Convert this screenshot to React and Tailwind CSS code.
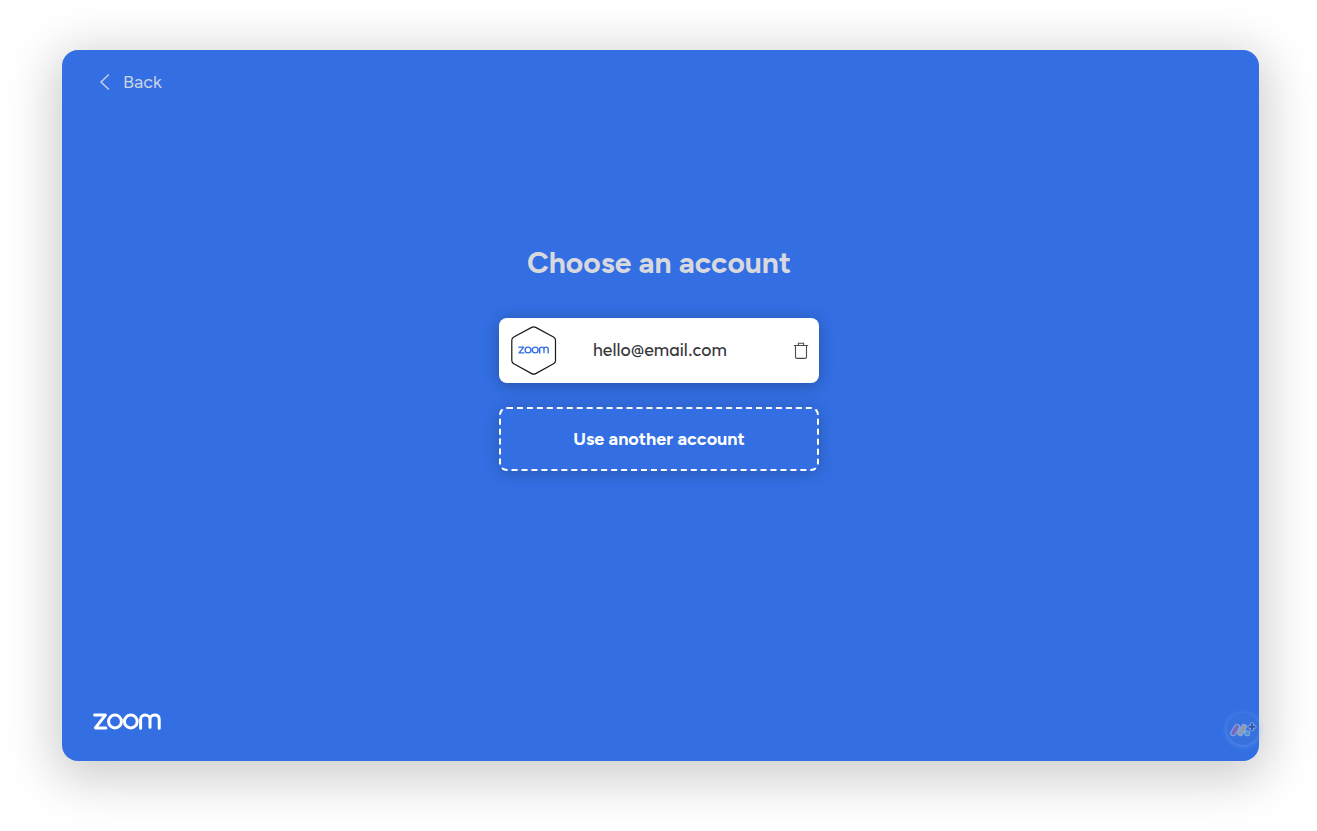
function ZoomLogo({ className }) {
  return (
    <svg viewBox="0 0 68 17" className={className} fill="none" stroke="currentColor" strokeWidth="3" role="img" aria-label="zoom">
      <path d="M1.6 2.1H12.4L2.4 14.9H12.9" strokeLinecap="round" strokeLinejoin="round" />
      <circle cx="22" cy="8.5" r="6.4" />
      <circle cx="37.8" cy="8.5" r="6.4" />
      <path d="M47.6 15.2V6.4C47.6 3.8 49.4 2.1 52.1 2.1S57 3.8 57 6.4V14.2M57 6.4C57 3.8 58.8 2.1 61.6 2.1S66.2 3.8 66.2 6.4V15.2" strokeLinecap="round" />
    </svg>
  );
}

function AccountAvatar() {
  return (
    <span className="relative flex h-[50px] w-[46px] items-center justify-center text-[#316de2]">
      <svg viewBox="0 0 46 50" className="absolute inset-0 h-full w-full" fill="white" stroke="#17191d" strokeWidth="1.2" aria-hidden="true">
        <path d="M20.7 1.4Q22.7 0.3 24.7 1.4L42.5 11Q44.5 12.1 44.5 14.3V34.5Q44.5 36.7 42.5 37.8L24.7 47.6Q22.7 48.7 20.7 47.6L2.8 37.8Q0.8 36.7 0.8 34.5V14.3Q0.8 12.1 2.8 11Z" />
      </svg>
      <ZoomLogo className="relative mr-0.5 mb-0.5 h-2 w-[31px]" />
    </span>
  );
}

function TrashIcon() {
  return (
    <svg viewBox="0 0 16 18" className="h-[18px] w-4" fill="none" stroke="#4b4b4e" strokeWidth="1.1" aria-hidden="true">
      <path d="M0.8 3.5H15.2M5.4 3.2V1.2H10.6V3.2M2.5 3.7V14.9Q2.5 16.4 4 16.4H12Q13.5 16.4 13.5 14.9V3.7" />
    </svg>
  );
}

function AssistantBadge() {
  return (
    <button
      type="button"
      aria-label="Assistant"
      className="absolute right-0 bottom-4 flex h-8 w-8 items-center justify-center rounded-full bg-[#3771dd] shadow-[0_1px_5px_1px_rgba(130,170,240,0.4)]"
    >
      <svg viewBox="0 0 28 18" className="h-[18px] w-7 shrink-0" fill="none" strokeLinecap="round" aria-hidden="true">
        <g stroke="#86a8e8" strokeWidth="6">
          <path d="M4.2 13.2L8 6.8M11.3 13.2L15 6.8M18.2 13.2H18.3" />
          <path d="M20.5 6.8H25.5M23 4.3V9.3" strokeWidth="4" />
        </g>
        <path d="M4.2 13.2L8 6.8" stroke="#7568bd" strokeWidth="4" />
        <path d="M11.3 13.2L15 6.8" stroke="#8d9caa" strokeWidth="4" />
        <path d="M18.2 13.2H18.3" stroke="#3e9dcb" strokeWidth="4" />
        <path d="M19.5 6.8H26.5M23 3.3V10.3" stroke="#3157ae" strokeWidth="2" strokeLinecap="butt" />
      </svg>
    </button>
  );
}

export default function App() {
  return (
    <div className="flex min-h-screen bg-white pt-[50px] pr-[58px] pb-[70px] pl-[62px] font-['Figtree','Inter','Liberation_Sans',sans-serif]">
      <div className="relative flex flex-1 flex-col rounded-2xl bg-[#336fe3] shadow-[0_10px_50px_8px_rgba(0,0,0,0.2)]">
        <header className="flex px-9 pt-5">
          <button type="button" className="flex h-6 items-center gap-[11px] text-lg text-[#cbd3e4]">
            <svg viewBox="0 0 14 18" className="h-[18px] w-[14px]" fill="none" stroke="currentColor" strokeWidth="1.4" aria-hidden="true">
              <path d="M10.8 1.5L3 9L10.8 16.5" />
            </svg>
            Back
          </button>
        </header>

        <main className="flex flex-col items-center pt-[149px] pr-[3px]">
          <h1 className="text-3xl leading-10 font-bold text-[#d7d9de]">Choose an account</h1>
          <div className="mt-[35px] flex h-[65px] w-80 items-center rounded-lg bg-white pr-2.5 pl-3 shadow-[0_2px_16px_rgba(0,0,0,0.28)]">
            <AccountAvatar />
            <span className="flex-1 pr-5 pb-0.5 pl-9 text-left font-['Outfit','Lato',sans-serif] text-lg text-[#38383b]">
              hello@email.com
            </span>
            <button type="button" aria-label="Remove account">
              <TrashIcon />
            </button>
          </div>
          <button
            type="button"
            className="mt-6 h-16 w-80 rounded-lg border-2 border-dashed border-white bg-[#336fe3] text-lg font-bold text-white shadow-[0_2px_16px_rgba(0,0,0,0.22)]"
          >
            Use another account
          </button>
        </main>

        <footer className="mt-auto flex px-[31px] pb-[31px] text-white">
          <ZoomLogo className="h-[17px] w-[68px]" />
        </footer>
        <AssistantBadge />
      </div>
    </div>
  );
}
